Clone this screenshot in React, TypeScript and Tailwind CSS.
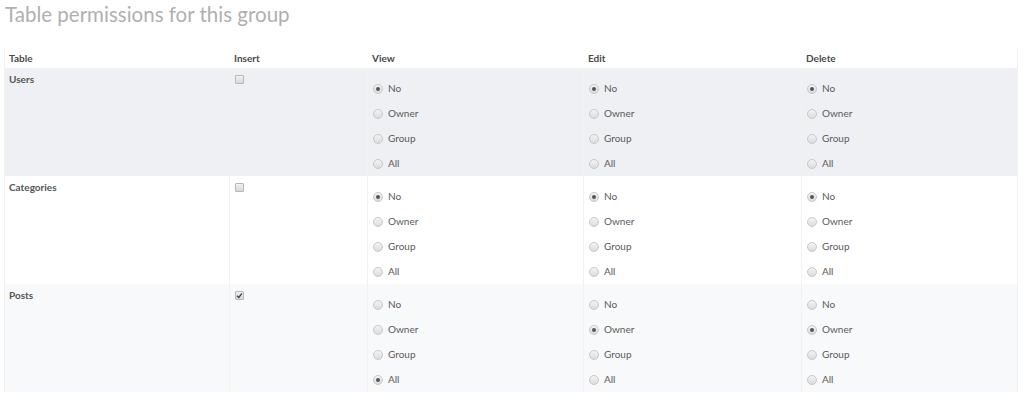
const levels = ["No", "Owner", "Group", "All"];

type Row = {
  name: string;
  insert: boolean;
  view: string;
  edit: string;
  del: string;
  bg: string;
};

const rows: Row[] = [
  { name: "Users", insert: false, view: "No", edit: "No", del: "No", bg: "bg-[#eef0f4]" },
  { name: "Categories", insert: false, view: "No", edit: "No", del: "No", bg: "bg-white" },
  { name: "Posts", insert: true, view: "All", edit: "Owner", del: "Owner", bg: "bg-[#f8f9fb]" },
];

const grid = "grid grid-cols-[224px_138px_216px_218px_218px]";

function Radio({ checked }: { checked: boolean }) {
  return (
    <span className="flex h-[10px] w-[10px] items-center justify-center rounded-full border border-[#c8c8c8] bg-gradient-to-b from-[#f4f4f4] to-[#dcdcdc]">
      {checked && <span className="h-[4px] w-[4px] rounded-full bg-[#555]" />}
    </span>
  );
}

function Checkbox({ checked }: { checked: boolean }) {
  return (
    <span className="flex h-[9px] w-[9px] items-center justify-center rounded-[1px] border border-[#b8b8b8] bg-gradient-to-b from-[#f2f2f2] to-[#d8d8d8]">
      {checked && (
        <svg width="7" height="7" viewBox="0 0 8 8">
          <path d="M1.2 4.2 L3.2 6.2 L6.8 1.6" fill="none" stroke="#444" strokeWidth="1.6" />
        </svg>
      )}
    </span>
  );
}

function RadioGroup({ value }: { value: string }) {
  return (
    <div className="flex flex-col pt-[8px] px-[5px] border-l border-[#f2f2f2]">
      {levels.map((l) => (
        <label key={l} className="flex h-[25px] items-center gap-[5px] text-[10px] text-[#5a5a5a]">
          <Radio checked={l === value} />
          <span>{l}</span>
        </label>
      ))}
    </div>
  );
}

export default function App() {
  return (
    <div className="min-h-[400px] bg-white font-['Lato','Open_Sans',sans-serif]">
      <h2 className="px-[5px] text-[20.5px] leading-[28px] text-[#b0b0b0]">
        Table permissions for this group
      </h2>
      <div className="mx-[4px] mt-[20px] w-[1014px] border-x border-[#f2f2f2]">
        <div className={`${grid} h-[20px] items-center text-[10px] font-bold text-[#4a4a4a]`}>
          <div className="px-[4px]">Table</div>
          <div className="px-[5px]">Insert</div>
          <div className="px-[5px]">View</div>
          <div className="px-[5px]">Edit</div>
          <div className="px-[5px]">Delete</div>
        </div>
        {rows.map((r) => (
          <div key={r.name} className={`${grid} ${r.bg}`}>
            <div className="px-[4px] pt-[4px] text-[10px] leading-[14px] font-bold text-[#555]">{r.name}</div>
            <div className="px-[5px] pt-[7px] border-l border-[#f2f2f2]">
              <Checkbox checked={r.insert} />
            </div>
            <RadioGroup value={r.view} />
            <RadioGroup value={r.edit} />
            <RadioGroup value={r.del} />
          </div>
        ))}
      </div>
    </div>
  );
}
